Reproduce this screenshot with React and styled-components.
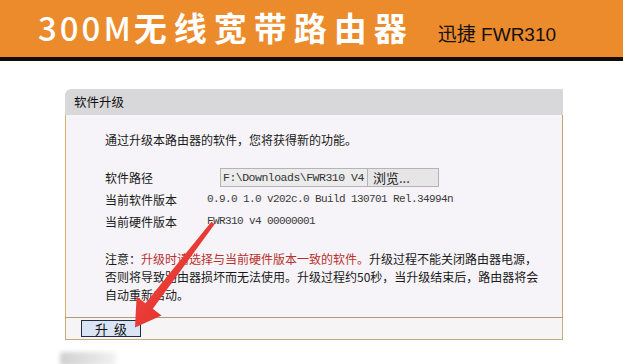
import React from "react";
import styled, { createGlobalStyle } from "styled-components";

const GlobalStyle = createGlobalStyle`
  html, body {
    margin: 0;
    padding: 0;
    background: #ffffff;
  }
  body {
    font-family: "Noto Sans CJK SC", "Liberation Sans", sans-serif;
  }
`;

const Page = styled.div`
  position: relative;
  width: 623px;
  height: 364px;
  overflow: hidden;
  background: #ffffff;
`;

const Header = styled.div`
  height: 57px;
  background: #ec8b2c;
  display: flex;
  align-items: baseline;
  padding-left: 38px;
  box-sizing: border-box;
  padding-top: 2px;
`;

const Title = styled.div`
  color: #ffffff;
  font-family: "Noto Sans CJK SC", sans-serif;
  font-size: 33px;
  font-weight: 700;
  line-height: 50px;
  letter-spacing: 7px;
  white-space: nowrap;
`;

const Digits = styled.span`
  letter-spacing: 3px;
  font-weight: 500;
`;

const Model = styled.div`
  margin-left: 24px;
  color: #111;
  font-family: "Liberation Sans", "Noto Sans CJK SC", sans-serif;
  font-size: 19px;
  white-space: nowrap;
`;

const DarkBar = styled.div`
  height: 4px;
  background: #140c08;
`;

const Panel = styled.div`
  margin: 28px 0 0 65px;
  width: 498px;
  font-size: 12px;
  color: #1a1a1a;
`;

const PanelTitle = styled.div`
  height: 26px;
  line-height: 26px;
  padding-left: 9px;
  background: #d8d7da;
  border-radius: 6px 0 0 0;
  font-size: 12.5px;
  color: #111;
`;

const PanelBody = styled.div`
  background: #f6f4f8;
  border-left: 1px solid #d8b068;
  border-right: 1px solid #c7a56a;
  padding: 16px 0 13px 39px;
`;

const Line = styled.div`
  line-height: 18px;
  white-space: nowrap;
`;

const InfoTable = styled.div`
  margin-top: 17px;
  display: flex;
  flex-direction: column;
`;

const Row = styled.div`
  display: flex;
  align-items: center;
  height: 22px;
`;

const Label = styled.div`
  width: 102px;
  flex: none;
`;

const Value = styled.div`
  font-family: "Liberation Mono", monospace;
  font-size: 11px;
  letter-spacing: -0.6px;
  color: #3a3a3a;
  white-space: nowrap;
`;

const PathInput = styled.input`
  margin-left: 13px;
  width: 147px;
  height: 19px;
  box-sizing: border-box;
  border: 1px solid #b4b4b4;
  border-right: none;
  background: #ececec;
  padding: 0 2px;
  font-family: "Liberation Mono", monospace;
  font-size: 11.5px;
  letter-spacing: -0.5px;
  color: #333;
  outline: none;
`;

const BrowseButton = styled.button`
  width: 72px;
  height: 19px;
  box-sizing: border-box;
  border: 1px solid #b4b4b4;
  background: #e6e6e6;
  padding: 0 0 0 5px;
  text-align: left;
  font-family: "Noto Sans CJK SC", sans-serif;
  font-size: 13px;
  line-height: 17px;
  color: #222;
`;

const Notice = styled.div`
  margin-top: 18px;
  line-height: 18px;
  white-space: nowrap;
`;

const Red = styled.span`
  color: #b8322c;
`;

const PanelFooter = styled.div`
  height: 21px;
  background: #f7f4f6;
  border: 1px solid #c4aa78;
  border-top-color: #b19c78;
  display: flex;
  align-items: center;
  padding-left: 15px;
`;

const UpgradeButton = styled.button`
  width: 60px;
  height: 17px;
  box-sizing: border-box;
  border: 1px solid #1f2c46;
  background: #d9e5f5;
  padding: 0;
  font-family: "Noto Sans CJK SC", sans-serif;
  font-size: 13px;
  line-height: 15px;
  letter-spacing: 6px;
  text-indent: 6px;
  color: #111;
`;

const Smudge = styled.div`
  margin: 12px 0 0 60px;
  width: 56px;
  height: 14px;
  border-radius: 3px;
  background: linear-gradient(90deg, #d0d0d0, #e4e4e4 60%, #f2f2f2);
  filter: blur(2px);
`;

const Overlay = styled.svg`
  position: absolute;
  left: 0;
  top: 0;
  pointer-events: none;
`;

function App() {
  return (
    <Page>
      <GlobalStyle />
      <Header>
        <Title>
          <Digits>300M</Digits>无线宽带路由器
        </Title>
        <Model>迅捷 FWR310</Model>
      </Header>
      <DarkBar />
      <Panel>
        <PanelTitle>软件升级</PanelTitle>
        <PanelBody>
          <Line>通过升级本路由器的软件，您将获得新的功能。</Line>
          <InfoTable>
            <Row>
              <Label>软件路径</Label>
              <PathInput readOnly value="F:\Downloads\FWR310 V4.0升级软件.bin" />
              <BrowseButton>浏览...</BrowseButton>
            </Row>
            <Row>
              <Label>当前软件版本</Label>
              <Value>0.9.0 1.0 v202c.0 Build 130701 Rel.34994n</Value>
            </Row>
            <Row>
              <Label>当前硬件版本</Label>
              <Value>FWR310 v4 00000001</Value>
            </Row>
          </InfoTable>
          <Notice>
            注意：<Red>升级时请选择与当前硬件版本一致的软件。</Red>升级过程不能关闭路由器电源，
            <br />
            否则将导致路由器损坏而无法使用。升级过程约50秒，当升级结束后，路由器将会
            <br />
            自动重新启动。
          </Notice>
        </PanelBody>
        <PanelFooter>
          <UpgradeButton>升级</UpgradeButton>
        </PanelFooter>
      </Panel>
      <Smudge />
      <Overlay width="623" height="364" viewBox="0 0 623 364">
        <defs>
          <linearGradient id="arrowFill" x1="0" y1="0" x2="1" y2="1">
            <stop offset="0" stopColor="#f0504a" />
            <stop offset="1" stopColor="#e0251f" />
          </linearGradient>
        </defs>
        <polygon
          points="211.4,221.8 214.6,224.2 152.8,308.8 161.5,315.6 135,327.5 136.6,296.4 145.4,303.2"
          fill="url(#arrowFill)"
        />
      </Overlay>
    </Page>
  );
}

export default App;
